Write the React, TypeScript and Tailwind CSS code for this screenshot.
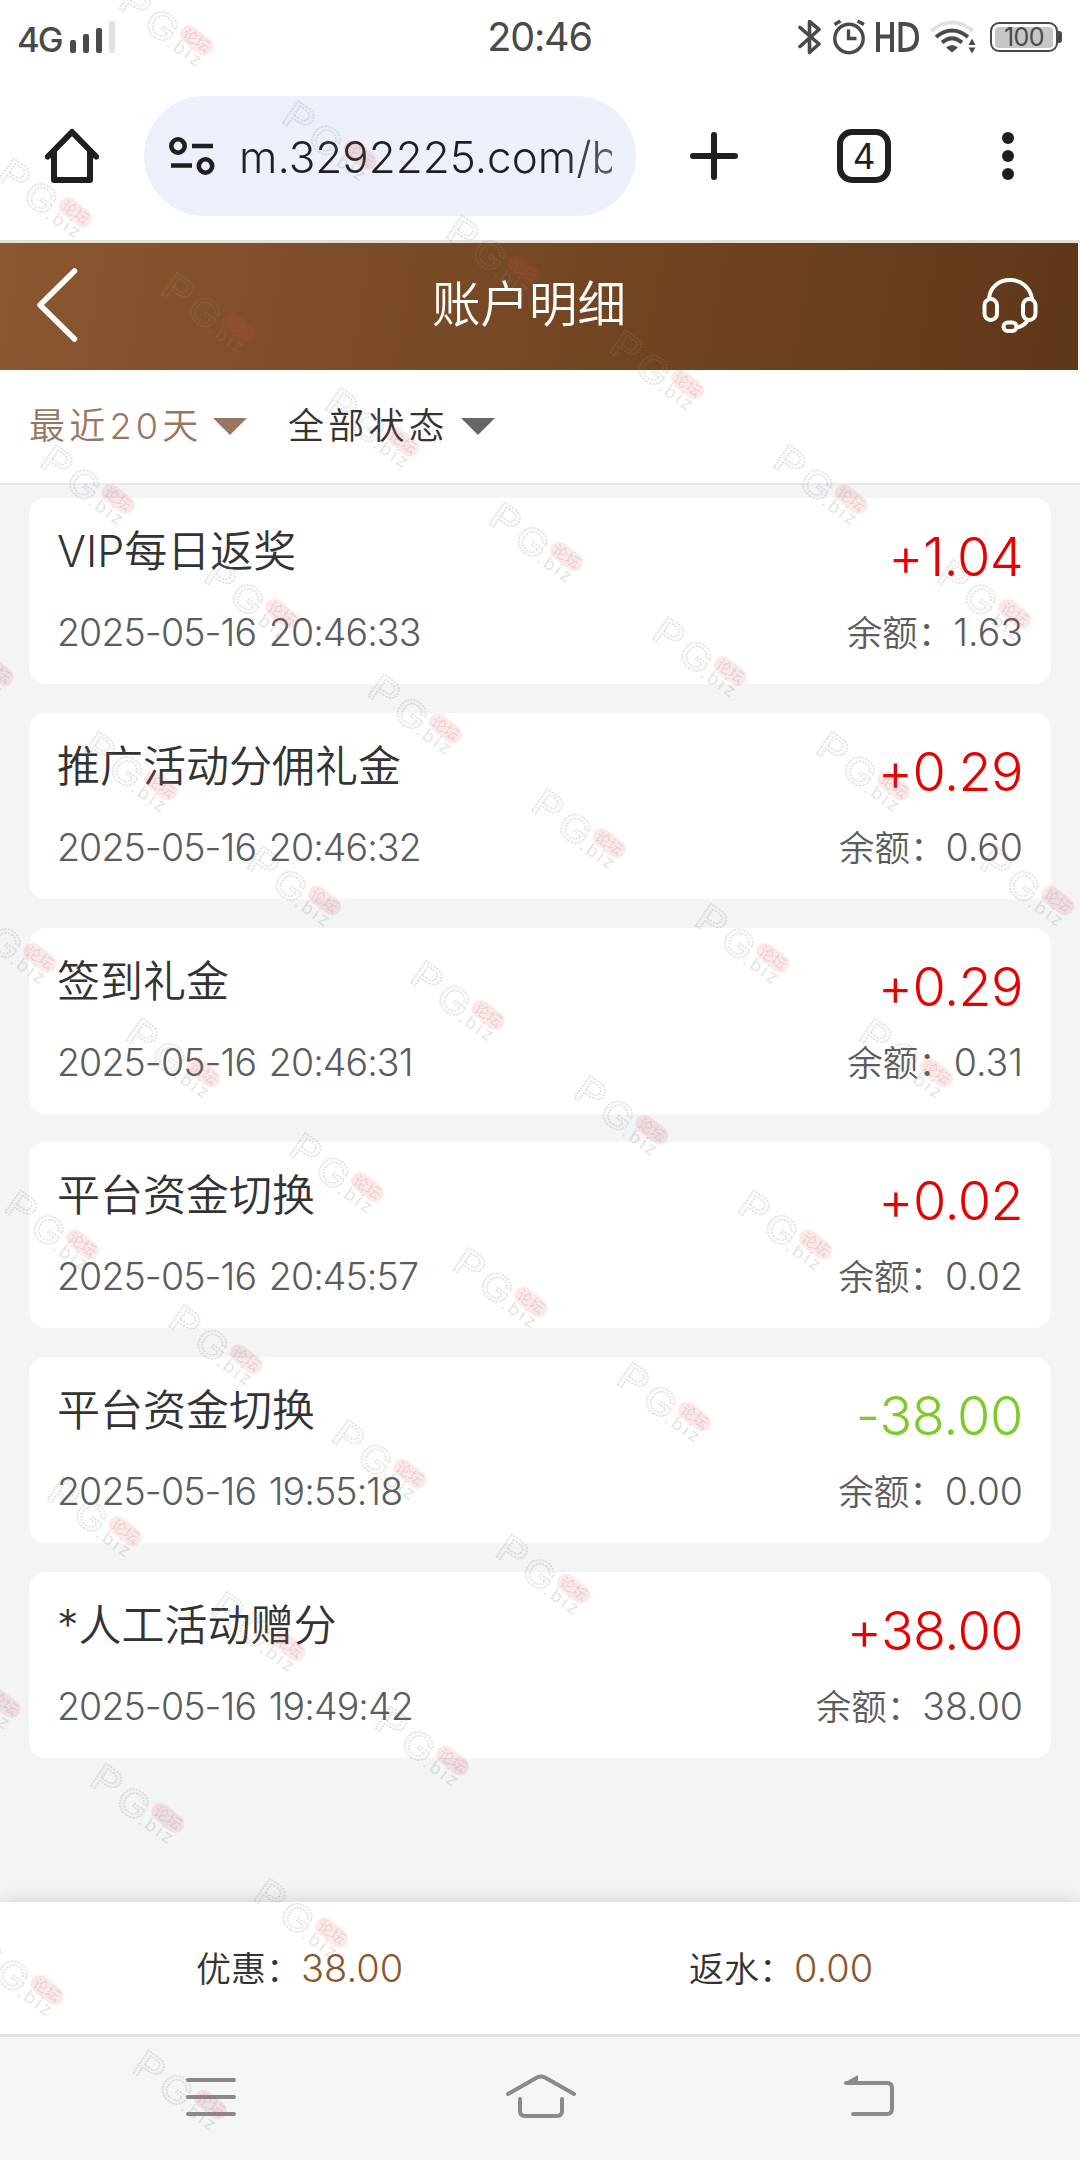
import React from "react";

interface AccountRecord {
  id: number;
  title: string;
  time: string;
  amount: string;
  balance: string;
}

const records: AccountRecord[] = [
  { id: 1, title: "VIP每日返奖", time: "2025-05-16 20:46:33", amount: "+1.04", balance: "1.63" },
  { id: 2, title: "推广活动分佣礼金", time: "2025-05-16 20:46:32", amount: "+0.29", balance: "0.60" },
  { id: 3, title: "签到礼金", time: "2025-05-16 20:46:31", amount: "+0.29", balance: "0.31" },
  { id: 4, title: "平台资金切换", time: "2025-05-16 20:45:57", amount: "+0.02", balance: "0.02" },
  { id: 5, title: "平台资金切换", time: "2025-05-16 19:55:18", amount: "-38.00", balance: "0.00" },
  { id: 6, title: "*人工活动赠分", time: "2025-05-16 19:49:42", amount: "+38.00", balance: "38.00" },
];

export default function App() {
  return (
    <div className="relative flex h-[2160px] w-[1080px] flex-col overflow-hidden bg-white font-['Inter','Noto_Sans_CJK_SC',sans-serif] font-[350] text-[#333]">
      <StatusBar />
      <BrowserBar />
      <PageHeader />
      <Filters />
      <main className="flex flex-1 flex-col gap-[28.8px] bg-[#f2f4f6] px-[29px] pt-[13px]">
        {records.map((r) => (
          <RecordCard key={r.id} record={r} />
        ))}
      </main>
      <Summary />
      <NavBar />
      <Watermarks />
    </div>
  );
}

function StatusBar() {
  return (
    <div className="flex h-[76px] shrink-0 items-center pr-[18px] pl-[17px] text-[#4a4a4a]">
      <div className="flex flex-1 items-end">
        <span className="w-[53px] text-[34.500px] leading-[33px] font-medium tracking-[-2px]">4G</span>
        <svg width="45" height="32" viewBox="0 0 45 32" fill="#4a4a4a" className="mb-[3px]">
          <rect x="0" y="19" width="6" height="13" rx="2" />
          <rect x="13" y="13" width="6" height="19" rx="2" />
          <rect x="26" y="7" width="6" height="25" rx="2" />
          <rect x="39" y="0" width="6" height="32" rx="2" fill="#e2e2e2" />
        </svg>
      </div>
      <span className="text-[39.500px] leading-none font-normal tracking-[-1.200px]">20:46</span>
      <div className="flex flex-1 items-center justify-end pb-[2px]">
        <svg width="24" height="36" viewBox="0 0 24 36" fill="none" stroke="#4a4a4a" strokeWidth="3.600" strokeLinejoin="round" strokeLinecap="round">
          <path d="M2 8.500 21 25 11.500 33.500V2.500L21 10.500 2 27.500" />
        </svg>
        <svg width="32" height="36" viewBox="0 0 32 36" fill="none" stroke="#4a4a4a" strokeWidth="3.400" className="ml-[11px]">
          <circle cx="16" cy="19.500" r="14.200" />
          <path d="M15.500 10.500V19.500H23.500M1.500 5.500 7.500 2M24.500 2 31 5.500" />
        </svg>
        <svg width="43" height="30" viewBox="0 0 43 30" fill="none" stroke="#4a4a4a" strokeWidth="4" className="ml-[11px]">
          <path d="M2 0V30M16 0V30M2 14.500H16M24.500 2V28H28Q41 28 41 15T28 2Z" />
        </svg>
        <svg width="46" height="34" viewBox="0 0 46 34" fill="none" stroke="#4a4a4a" strokeWidth="4" className="ml-[11px]">
          <path d="M1 11Q22 -6 43 11" stroke="#e2e2e2" />
          <path d="M6 17Q22 4 38 17M12 22.500Q22 14 32 22.500" />
          <path d="M22 32.500 16 27.500Q22 22.500 28 27.500Z" fill="#4a4a4a" stroke="none" />
          <path d="M42 18.500 45.500 25H38.500ZM42 33.500 45.500 27.500H38.500Z" fill="#4a4a4a" stroke="none" />
        </svg>
        <div className="ml-[14px] flex h-[30px] w-[68px] items-center justify-center rounded-[9px] border-2 border-[#4a4a4a]">
          <div className="flex h-[21px] w-[58px] items-center justify-center rounded-[4px] bg-[#c6c6c5] text-[25px] leading-none font-normal tracking-[-0.500px]">100</div>
        </div>
        <div className="h-[12px] w-[4px] rounded-r-[3px] bg-[#4a4a4a]" />
      </div>
    </div>
  );
}

function BrowserBar() {
  return (
    <div className="flex h-[167px] shrink-0 items-start border-b-[3px] border-[#e2e0d8] pt-[20px]">
      <svg width="54" height="56" viewBox="0 0 54 56" fill="none" stroke="#1f1f1f" strokeWidth="6" strokeLinejoin="round" strokeLinecap="round" className="mt-[32px] ml-[45px]">
        <path d="M3 28.500 27 4 51 28.500M9 24V52H45V24" />
      </svg>
      <div className="ml-[45px] flex h-[120px] w-[492px] items-center rounded-full bg-[#ecf0fa] pl-[25px]">
        <svg width="46" height="38" viewBox="0 0 46 38" fill="none" stroke="#1f1f1f" strokeWidth="4.600">
          <circle cx="9" cy="9" r="6.700" />
          <circle cx="36.500" cy="29" r="6.700" />
          <path d="M23 9H44M2 28.500H23" />
        </svg>
        <div className="ml-[24px] w-[373px] overflow-hidden bg-linear-to-r from-[#1f1f1f] from-85% to-[#5f646b] bg-clip-text pt-[2px] text-[44px] leading-[60px] font-light whitespace-nowrap text-transparent">
          m.3292225.com/b
        </div>
      </div>
      <svg width="48" height="50" viewBox="0 0 48 50" stroke="#1f1f1f" strokeWidth="6" strokeLinecap="round" className="mt-[35px] ml-[54px]">
        <path d="M3 25H45M24 4V46" />
      </svg>
      <div className="mt-[33px] ml-[99px] flex h-[54px] w-[54px] items-center justify-center rounded-[15px] border-6 border-[#1f1f1f] text-[35px] leading-none font-normal text-[#1f1f1f]">
        4
      </div>
      <div className="mt-[36px] ml-[111px] flex flex-col gap-[6px]">
        <i className="h-[12px] w-[12px] rounded-full bg-[#1f1f1f]" />
        <i className="h-[12px] w-[12px] rounded-full bg-[#1f1f1f]" />
        <i className="h-[12px] w-[12px] rounded-full bg-[#1f1f1f]" />
      </div>
    </div>
  );
}

function PageHeader() {
  return (
    <header className="mr-[2px] flex h-[127px] shrink-0 items-center justify-between bg-linear-[100deg] from-[#8b572f] to-[#5f3719] pr-[40px] pb-[4px] pl-[36px] text-white">
      <svg width="56" height="76" viewBox="0 0 56 76" fill="none" stroke="#fff" strokeWidth="5.500" strokeLinecap="round" strokeLinejoin="round">
        <path d="M38.500 4 4 38 38.500 72" />
      </svg>
      <h1 className="pr-[16px] text-[48.500px] leading-[64px]">账户明细</h1>
      <svg width="56" height="56" viewBox="0 0 56 56" fill="none" stroke="#fff" strokeWidth="4" strokeLinecap="round">
        <path d="M7 21.500C8 10 17 3 28 3S48 10 50 21.500" />
        <rect x="2.500" y="22" width="12.500" height="21" rx="6.200" />
        <rect x="41" y="22" width="12.500" height="21" rx="6.200" />
        <rect x="21.500" y="45.500" width="13" height="8.500" rx="4.250" />
        <path d="M34.500 50.500Q41 50 46 43" />
      </svg>
    </header>
  );
}

function Filters() {
  return (
    <div className="flex h-[115px] shrink-0 items-center border-b-2 border-[#e9eaea] pl-[29px] text-[36px] leading-[50px] tracking-[4.200px]">
      <span className="w-[184px] pb-[2px] whitespace-nowrap text-[#9a765f]">最近20天</span>
      <Caret className="text-[#9a765f]" />
      <span className="ml-[41px] w-[173px] pb-[2px] whitespace-nowrap">全部状态</span>
      <Caret className="text-[#666]" />
    </div>
  );
}

function Caret({ className }: { className: string }) {
  return (
    <svg width="34" height="17" viewBox="0 0 34 17" fill="currentColor" className={className}>
      <path d="M0 0H34L17 17Z" />
    </svg>
  );
}

function RecordCard({ record }: { record: AccountRecord }) {
  const income = record.amount.startsWith("+");
  return (
    <div className="flex h-[186px] shrink-0 justify-between rounded-[17px] bg-white pr-[28px] pl-[28px]">
      <div className="flex flex-col">
        <div className="mt-[23px] text-[43px] leading-[60px]">{record.title}</div>
        <div className="mt-[27px] text-[37.500px] leading-[50px] font-light tracking-[-0.900px] [word-spacing:3px] text-[#5c5c5c]">
          {record.time}
        </div>
      </div>
      <div className="flex flex-col items-end">
        <div
          className={
            income
              ? "mt-[29px] text-[54px] leading-[60px] font-light tracking-[-0.600px] text-[#e60000]"
              : "mt-[29px] text-[54px] leading-[60px] font-light tracking-[-0.300px] text-[#7ecb28]"
          }
        >
          {record.amount}
        </div>
        <div className="mt-[21px] text-[37.500px] leading-[50px] font-light text-[#5c5c5c]">
          <span className="text-[35.500px] font-[350]">余额：</span>
          {record.balance}
        </div>
      </div>
    </div>
  );
}

function Summary() {
  return (
    <div className="flex h-[132px] shrink-0 items-center bg-white pl-[196px] text-[35px] leading-[50px] shadow-[0_0_18px_rgba(0,0,0,0.16)]">
      <div className="w-[493px]">
        优惠：<span className="text-[38px] font-light text-[#8b572f]">38.00</span>
      </div>
      <div>
        返水：<span className="text-[38px] font-light text-[#8b572f]">0.00</span>
      </div>
    </div>
  );
}

function NavBar() {
  return (
    <div className="z-10 flex h-[126px] shrink-0 items-center border-t-[3px] border-[#dfe1dd] bg-[#f3f5f7] pb-[4px] pl-[186px]">
      <svg width="50" height="46" viewBox="0 0 50 46" stroke="#8a8a8a" strokeWidth="4" strokeLinecap="round">
        <path d="M2 6H48M2 23H48M2 40H48" />
      </svg>
      <svg width="72" height="46" viewBox="0 0 72 46" fill="none" stroke="#8a8a8a" strokeWidth="4" strokeLinecap="round" className="ml-[269px]">
        <path d="M3 20 32 3.500Q36 1.500 40 3.500L69 20M15 25V37Q15 42 20 42H52Q57 42 57 37V25" />
      </svg>
      <svg width="52" height="46" viewBox="0 0 52 46" fill="none" stroke="#8a8a8a" strokeWidth="4" strokeLinecap="round" className="ml-[266px]">
        <path d="M3 9H44Q49 9 49 14V35Q49 40 44 40H10" />
        <path d="M1 9 15 1V10Z" fill="#8a8a8a" stroke="none" />
      </svg>
    </div>
  );
}

// diagonal grid of site marks laid over the whole screen
function Watermarks() {
  const marks: { x: number; y: number }[] = [];
  for (let j = 0; j <= 8; j++) {
    for (let i = 0; i <= 6; i++) {
      const x = 196 + i * 163.7 - j * 121;
      const y = 40 + i * 114.7 + j * 172;
      if (x > -20 && x < 1130) marks.push({ x, y });
    }
  }

  return (
    <svg width="1080" height="2160" viewBox="0 0 1080 2160" className="pointer-events-none absolute inset-0 z-20">
      {marks.map((m) => (
        <g key={`${m.x}-${m.y}`} transform={`translate(${m.x} ${m.y}) rotate(35)`}>
          <g fill="#888" fillOpacity="0.03" stroke="#8a8a94" strokeOpacity="0.28" strokeWidth="1.300" strokeDasharray="2 1" fontSize="37" fontWeight="500">
            <text x="-85" y="18" textLength="29" lengthAdjust="spacingAndGlyphs">P</text>
            <text x="-52" y="21" textLength="32" lengthAdjust="spacingAndGlyphs">G</text>
          </g>
          <rect x="-18" y="-9" width="37" height="18" rx="9" fill="#f04444" fillOpacity="0.13" transform="rotate(3)" />
          <text x="-14.500" y="5.500" fontSize="15" fontWeight="400" fill="#777" fillOpacity="0.2">论坛</text>
          <text x="-22" y="22" fontSize="18" fontWeight="400" letterSpacing="2.500" fill="#888" fillOpacity="0.24">.biz</text>
        </g>
      ))}
    </svg>
  );
}
